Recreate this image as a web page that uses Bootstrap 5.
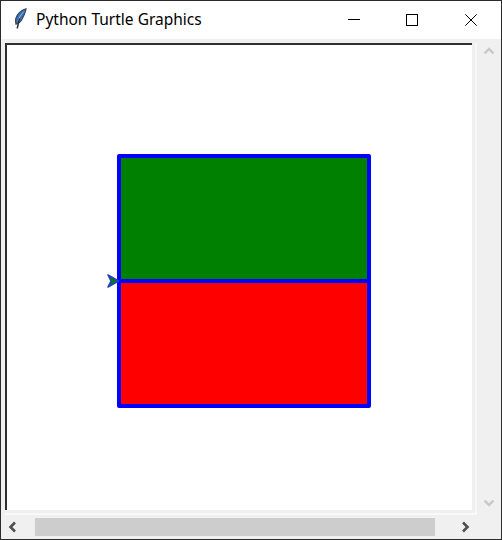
<!DOCTYPE html>
<html lang="en">

<head>
  <meta charset="UTF-8" />
  <meta name="viewport" content="width=device-width, initial-scale=1.0" />
  <title>Python Turtle Graphics</title>
  <link href="https://cdn.jsdelivr.net/npm/bootstrap@5.3.0/dist/css/bootstrap.min.css" rel="stylesheet" />
  <style>
    html, body { height: 100%; }

    body { background: #fff; overflow: hidden; }

    .tk-window {
      width: 502px;
      height: 540px;
      border: 1px solid #2b2b2b;
      background: #f0f0f0;
    }

    .tk-titlebar {
      height: 38px;
      flex: none;
      background: #fff;
      font-family: "Noto Sans", "Liberation Sans", sans-serif;
      font-size: 15.5px;
      color: #000;
    }

    .tk-feather { margin-left: 11px; margin-right: 8px; }

    .tk-winbtn { width: 58px; height: 38px; }

    .tk-winbtn-close { width: 60px; }

    .tk-body { padding: 4px 0 0 4px; min-height: 0; }

    .tk-canvas-frame {
      width: 472px;
      height: 472px;
      padding: 0 3px 3px 0;
      border-right: 2px solid #f8f8f8;
      border-bottom: 2px solid #f8f8f8;
    }

    .tk-canvas {
      width: 467px;
      height: 467px;
      background: #fff;
      border-top: 2px solid #2e2e2e;
      border-left: 2px solid #2e2e2e;
      display: block;
    }

    .tk-vbar {
      width: 20px;
      margin-left: 2px;
      height: 472px;
    }

    .tk-vbar-up { margin-top: 4px; }

    .tk-vbar-down { margin-bottom: 8px; }

    .tk-hbar { height: 18px; margin-top: 3px; }

    .tk-arrow { width: 30px; flex: none; padding-left: 2px; }

    .tk-track { width: 400px; height: 18px; background: #cdcdcd; }

    .tk-arrow-right { margin-left: 24px; }
  </style>
</head>

<body>
  <div class="tk-window d-flex flex-column">
    <div class="tk-titlebar d-flex align-items-center">
      <svg class="tk-feather" width="16" height="24" viewBox="0 0 16 24">
        <path d="M14 .8C10 1.600 5.200 5.500 3.800 10.500c-.5 2-.4 3.800.2 5.700 3-.7 5.200-3 6.600-6.200C12.200 6.800 13.600 3.800 14 .8z" fill="#3470b8" stroke="#3a4a5c" stroke-width="1.200" />
        <path d="M12 3.500C9 6.500 7 9.500 6 13" fill="none" stroke="#8fbbe6" stroke-width="1" />
        <path d="M7.500 10.500 5.200 20.500" fill="none" stroke="#333" stroke-width="1.500" />
      </svg>
      <span class="flex-grow-1">Python Turtle Graphics</span>
      <div class="tk-winbtn d-flex align-items-center justify-content-center">
        <svg width="12" height="12" viewBox="0 0 12 12"><path d="M0 5.500H12" stroke="#000" stroke-width="1" /></svg>
      </div>
      <div class="tk-winbtn d-flex align-items-center justify-content-center">
        <svg width="12" height="12" viewBox="0 0 12 12"><rect x=".5" y=".5" width="11" height="11" fill="none" stroke="#000" stroke-width="1" /></svg>
      </div>
      <div class="tk-winbtn tk-winbtn-close d-flex align-items-center justify-content-center">
        <svg width="12" height="12" viewBox="0 0 12 12"><path d="M.3 .3 11.700 11.700M11.700 .3 .3 11.700" stroke="#000" stroke-width="1" /></svg>
      </div>
    </div>

    <div class="tk-body d-flex flex-column">
      <div class="d-flex">
        <div class="tk-canvas-frame">
          <svg class="tk-canvas" viewBox="7 45 465 465" width="467" height="467">
            <rect x="119" y="156" width="250" height="125" fill="#008000" />
            <rect x="119" y="281" width="250" height="125" fill="#ff0000" />
            <path d="M119 156H369V406H119ZM119 281H369" fill="none" stroke="#0000ff" stroke-width="4" stroke-linejoin="round" />
            <path d="M118.500 281 108 275 111 281 108 287Z" fill="#008000" stroke="#2440c8" stroke-width="1.600" stroke-linejoin="round" />
          </svg>
        </div>
        <div class="tk-vbar d-flex flex-column align-items-center justify-content-between">
          <svg class="tk-vbar-up" width="12" height="8" viewBox="0 0 12 8"><path d="M1.500 6.500 6 2l4.500 4.500" fill="none" stroke="#c8c8c8" stroke-width="2.400" /></svg>
          <svg class="tk-vbar-down" width="12" height="8" viewBox="0 0 12 8"><path d="M1.500 1.500 6 6l4.500-4.500" fill="none" stroke="#c8c8c8" stroke-width="2.400" /></svg>
        </div>
      </div>
      <div class="tk-hbar d-flex align-items-center">
        <div class="tk-arrow d-flex">
          <svg width="12" height="12" viewBox="0 0 12 12"><path d="M8 1.500 3.500 6 8 10.500" fill="none" stroke="#505050" stroke-width="2.600" /></svg>
        </div>
        <div class="tk-track"></div>
        <svg class="tk-arrow-right" width="12" height="12" viewBox="0 0 12 12"><path d="M4 1.500 8.500 6 4 10.500" fill="none" stroke="#505050" stroke-width="2.600" /></svg>
      </div>
    </div>
  </div>

  <script src="https://cdn.jsdelivr.net/npm/bootstrap@5.3.0/dist/js/bootstrap.bundle.min.js"></script>
</body>

</html>
